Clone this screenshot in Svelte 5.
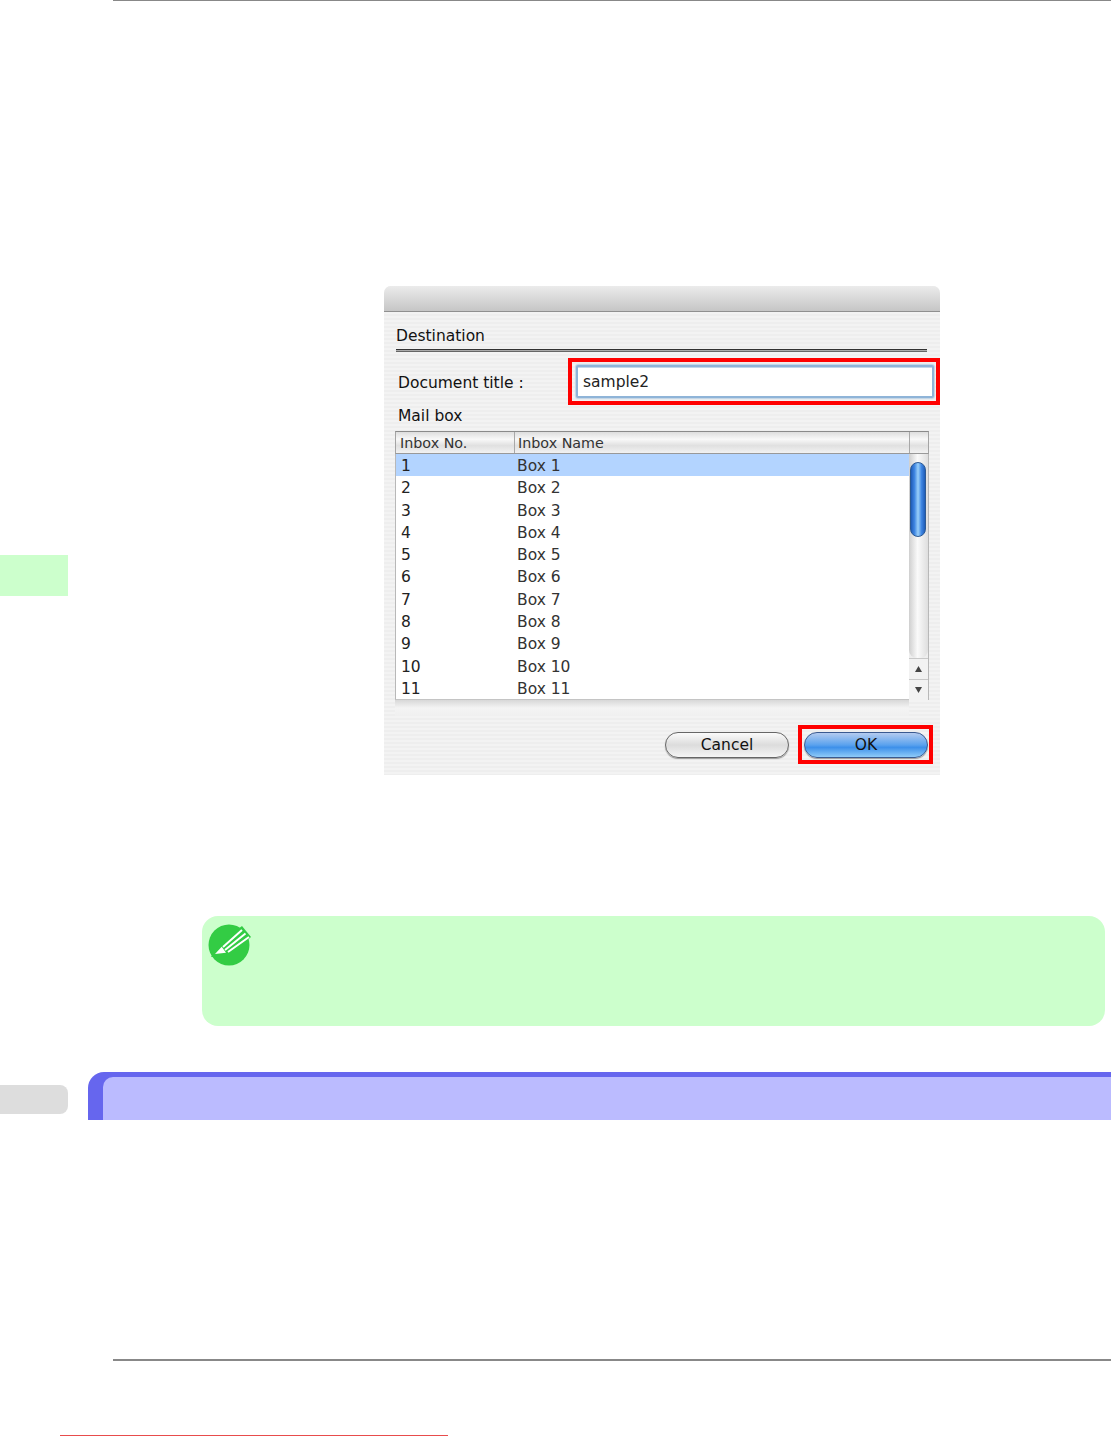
<script>
  const rows = [1, 2, 3, 4, 5, 6, 7, 8, 9, 10, 11];
</script>

<div class="page">
  <aside class="side">
    <div class="tab-green"></div>
    <div class="tab-grey"></div>
  </aside>

  <main class="main">
    <div class="rule-top"></div>

    <section class="dialog">
      <div class="titlebar"></div>
      <div class="dialog-body">
        <div class="group-title">Destination</div>
        <div class="double-rule"></div>

        <div class="title-row">
          <span class="doc-label">Document title :</span>
          <div class="mark mark-field">
            <div class="field">sample2</div>
          </div>
        </div>

        <div class="mail-label">Mail box</div>

        <div class="table">
          <div class="thead">
            <span class="th th-no">Inbox No.</span>
            <span class="th th-name">Inbox Name</span>
            <span class="th th-end"></span>
          </div>
          <div class="tbody">
            <div class="rows">
              {#each rows as n}
                <div class="row" class:selected={n === 1}>
                  <span class="cell-no">{n}</span>
                  <span class="cell-name">Box {n}</span>
                </div>
              {/each}
            </div>
            <div class="scrollbar">
              <div class="track">
                <div class="thumb"></div>
              </div>
              <div class="arrow">
                <svg width="9" height="8" viewBox="0 0 9 8"><path d="M4.5 1 8 7H1z" fill="#444" /></svg>
              </div>
              <div class="arrow">
                <svg width="9" height="8" viewBox="0 0 9 8"><path d="M1 1h7L4.500 7z" fill="#444" /></svg>
              </div>
            </div>
          </div>
          <div class="hscroll"></div>
        </div>

        <div class="actions">
          <button class="btn">Cancel</button>
          <div class="mark mark-ok">
            <button class="btn btn-ok">OK</button>
          </div>
        </div>
      </div>
    </section>

    <section class="note">
      <svg class="note-icon" width="46" height="44" viewBox="0 0 46 44">
        <circle cx="22" cy="22" r="20.500" fill="#33cc44" />
        <path d="M4 34 13 20 35 3 44 14 23 33z" fill="#33cc44" />
        <path d="M8 31 14.700 23.700 19 29.700z" fill="#fff" />
        <path d="M16 24 35 7M18 27 38.500 10.500M21 29 42 14" stroke="#fff" stroke-width="2" fill="none" />
      </svg>
    </section>

    <section class="heading">
      <div class="heading-inner"></div>
    </section>

    <div class="rule-bottom"></div>
    <div class="footer-line"></div>
  </main>
</div>

<style>
  :global(body) {
    margin: 0;
    background: #fff;
  }

  .page {
    display: grid;
    grid-template-columns: 68px 1fr;
    width: 1111px;
    height: 1436px;
    overflow: hidden;
    font-family: "DejaVu Sans", sans-serif;
    color: #222;
  }

  .side {
    display: flex;
    flex-direction: column;
    align-items: stretch;
  }

  .tab-green {
    height: 41px;
    margin-top: 555px;
    background: #ccffcc;
  }

  .tab-grey {
    height: 29px;
    margin-top: 489px;
    background: #dddddd;
    border-radius: 0 8px 8px 0;
  }

  .main {
    display: flex;
    flex-direction: column;
    min-width: 0;
  }

  .rule-top {
    height: 1px;
    margin-left: 45px;
    background: #888;
  }

  .dialog {
    width: 556px;
    height: 489px;
    margin: 285px 0 0 316px;
    background: repeating-linear-gradient(to bottom, #eeeeee 0 2px, #f3f3f3 2px 4px);
    border-radius: 7px 7px 0 0;
    font-size: 15px;
  }

  .titlebar {
    height: 25px;
    border-bottom: 1px solid #909090;
    border-radius: 7px 7px 0 0;
    background: linear-gradient(to bottom, #ebebeb, #c6c6c6);
  }

  .dialog-body {
    display: flex;
    flex-direction: column;
    height: 463px;
    padding-left: 12px;
  }

  .group-title {
    height: 22px;
    margin-top: 13px;
    line-height: 22px;
    font-size: 15.500px;
    color: #111;
  }

  .double-rule {
    width: 531px;
    height: 1px;
    margin-top: 2px;
    background: #aaa;
    border-top: 1px solid #333;
    border-bottom: 1px solid #666;
  }

  .title-row {
    display: flex;
    align-items: center;
    height: 47px;
    margin-top: 6px;
  }

  .doc-label {
    width: 172px;
    padding: 2px 0 0 2px;
    box-sizing: border-box;
    font-size: 15.500px;
    color: #111;
  }

  .mark {
    box-sizing: border-box;
    border: 4px solid #ff0000;
  }

  .mark-field {
    width: 372px;
    height: 47px;
    padding: 3px 2px 3px 4px;
  }

  .field {
    box-sizing: border-box;
    height: 33px;
    padding-left: 5px;
    line-height: 31px;
    font-size: 15.500px;
    background: #fff;
    border: 2px solid #8fb4d8;
    border-radius: 2px;
    box-shadow: inset 0 1px 0 #c4d6e8, 0 0 1px 1px #c0d4e6;
  }

  .mail-label {
    height: 20px;
    margin-top: 1px;
    padding-left: 2px;
    line-height: 20px;
    font-size: 15.500px;
    color: #111;
  }

  .table {
    width: 534px;
    margin: 5px 0 0 -1px;
    font-size: 14.300px;
  }

  .thead {
    display: flex;
    box-sizing: border-box;
    height: 23px;
    border: 1px solid #a4a4a4;
    border-top-color: #8a8a8a;
    border-bottom: 1px solid #999;
    background: linear-gradient(to bottom, #dedede, #f8f8f8 35%, #e0e0e0 65%, #f2f2f2);
  }

  .th {
    box-sizing: border-box;
    line-height: 23px;
    padding-left: 4px;
    border-right: 1px solid #a8a8a8;
    color: #333;
  }

  .th-no {
    width: 119px;
  }

  .th-name {
    width: 395px;
    padding-left: 3px;
  }

  .th-end {
    flex: 1;
    border-right: 0;
  }

  .tbody {
    display: flex;
    height: 246px;
  }

  .rows {
    width: 514px;
    background: #fff;
    border-left: 1px solid #b8b8b8;
    border-bottom: 1px solid #c4c4c4;
    box-sizing: border-box;
    overflow: hidden;
  }

  .row {
    display: flex;
    box-sizing: border-box;
    height: 22.300px;
    padding-top: 3px;
    line-height: 19.300px;
    font-size: 15.500px;
  }

  .row.selected {
    background: #b3d4ff;
  }

  .cell-no {
    width: 121px;
    padding-left: 5px;
    box-sizing: border-box;
  }

  .cell-name {
    color: #333;
  }

  .scrollbar {
    display: flex;
    flex-direction: column;
    flex: 1;
    border-right: 1px solid #b8b8b8;
    background: #eee;
  }

  .track {
    flex: 1;
    padding: 8px 2px 0 1px;
    background: linear-gradient(to right, #cfcfcf, #fafafa 45%, #dedede);
    border-radius: 0 0 8px 8px;
  }

  .thumb {
    height: 75px;
    box-sizing: border-box;
    border: 1px solid #2c5a94;
    border-radius: 8px;
    background: linear-gradient(to right, #1f5cb8, #3f86e2 25%, #9ad0fa 50%, #3f86e2 75%, #1f5cb8);
  }

  .arrow {
    display: flex;
    align-items: center;
    justify-content: center;
    height: 20px;
    background: #f2f2f2;
    border-top: 1px solid #c8c8c8;
  }

  .hscroll {
    width: 514px;
    height: 16px;
    background: linear-gradient(to bottom, #d8d8d8, #f4f4f4 50%, #f0f0f0);
  }

  .actions {
    display: flex;
    align-items: center;
    justify-content: flex-end;
    gap: 9px;
    width: 537px;
    height: 39px;
    margin-top: 9px;
  }

  .btn {
    box-sizing: border-box;
    width: 124px;
    height: 26px;
    padding: 0;
    border: 1px solid #666;
    border-radius: 13px;
    background: linear-gradient(to bottom, #fafafa, #dcdcdc 50%, #f5f5f5);
    box-shadow: 0 1px 1px #999;
    font-family: inherit;
    font-size: 15.500px;
    color: #111;
  }

  .mark-ok {
    width: 135px;
    height: 39px;
    padding: 3px 1px 3px 2px;
  }

  .btn-ok {
    display: block;
    border-color: #3a5a90;
    background: linear-gradient(to bottom, #b4cbef, #5aa2ee 50%, #3d90ea 60%, #8fcbf8);
  }

  .note {
    position: relative;
    box-sizing: border-box;
    width: 903px;
    height: 110px;
    margin: 141px 0 0 134px;
    background: #ccffcc;
    border-radius: 16px;
  }

  .note-icon {
    position: absolute;
    left: 5px;
    top: 7px;
  }

  .heading {
    box-sizing: border-box;
    height: 48px;
    margin: 46px 0 0 20px;
    padding: 5px 0 0 15px;
    background: #6666ee;
    border-radius: 16px 0 0 0;
  }

  .heading-inner {
    height: 43px;
    background: #bbbbff;
    border-radius: 10px 0 0 0;
  }

  .rule-bottom {
    height: 2px;
    margin: 239px 0 0 45px;
    background: #888;
  }

  .footer-line {
    width: 388px;
    height: 1px;
    margin-top: 74px;
    margin-left: -8px;
    background: #e84c4c;
  }
</style>
